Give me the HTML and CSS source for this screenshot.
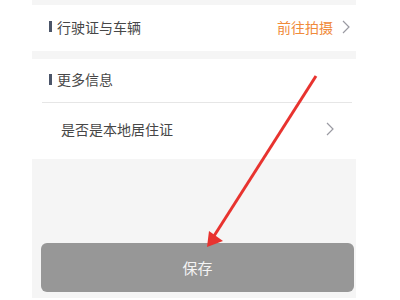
FILE: index.html
```html
<!DOCTYPE html>
<html lang="zh-CN">
<head>
  <meta charset="UTF-8" />
  <meta name="viewport" content="width=device-width, initial-scale=1.0" />
  <title>保存</title>
  <link rel="stylesheet" href="styles.css">
</head>
<body>
  <div class="panel">
    <section class="card">
      <div class="row row-top">
        <span class="title"><i class="bar"></i>行驶证与车辆</span>
        <span class="action">前往拍摄
          <svg class="chev" viewBox="0 0 8 14"><polyline points="1,1 7,7 1,13" /></svg>
        </span>
      </div>
    </section>

    <section class="card">
      <div class="row row-head">
        <span class="title"><i class="bar"></i>更多信息</span>
      </div>
      <div class="row row-item">
        <span class="label">是否是本地居住证</span>
        <svg class="chev" viewBox="0 0 8 14"><polyline points="1,1 7,7 1,13" /></svg>
      </div>
    </section>

    <button class="save">保存</button>
  </div>

  <svg class="arrow" viewBox="0 0 400 300">
    <line x1="316" y1="76" x2="214" y2="236" />
    <polygon points="207,247 209,231 223,241" />
  </svg>
</body>
</html>
```

FILE: styles.css
```css
body {
  margin: 0;
  background: #fff;
  font-family: "Noto Sans CJK SC", "Noto Sans", sans-serif;
  color: #474747;
}
.panel {
  margin-left: 32px;
  width: 324px;
  height: 298px;
  padding-top: 5px;
  box-sizing: border-box;
  background: #f5f5f5;
  display: flex;
  flex-direction: column;
}
.card {
  background: #fff;
  margin-bottom: 8px;
}
.row {
  display: flex;
  align-items: center;
  justify-content: space-between;
  font-size: 14px;
}
.row-top {
  height: 46px;
  padding: 0 6px 3px 17px;
  box-sizing: border-box;
}
.row-head {
  height: 44px;
  padding: 0 17px 3px 7px;
  box-sizing: border-box;
  margin-right: 4px;
  margin-left: 10px;
  border-bottom: 1px solid #e6e6e6;
}
.row-item {
  height: 56px;
  padding: 0 22px 4px 29px;
  box-sizing: border-box;
}
.title {
  display: flex;
  align-items: center;
}
.bar {
  display: inline-block;
  width: 3px;
  height: 11px;
  background: #4b5569;
  margin-right: 5px;
}
.action {
  display: flex;
  align-items: center;
  color: #f08a3a;
}
.chev {
  width: 8px;
  height: 14px;
  margin-left: 9px;
  fill: none;
  stroke: #9a9aa2;
  stroke-width: 1.2;
}
.save {
  margin: 76px 2px 0 9px;
  height: 49px;
  border: none;
  border-radius: 6px;
  background: #979797;
  color: #f4f4f4;
  font-family: inherit;
  font-size: 15px;
}
.arrow {
  position: absolute;
  top: 0;
  left: 0;
  width: 400px;
  height: 300px;
}
.arrow line {
  stroke: #e8332f;
  stroke-width: 3;
}
.arrow polygon {
  fill: #e8332f;
}
```
